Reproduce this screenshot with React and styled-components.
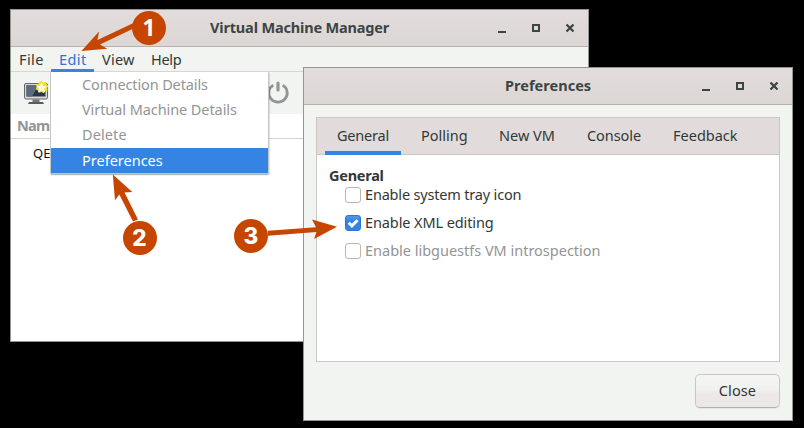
import React from "react";
import styled, { createGlobalStyle } from "styled-components";

const GlobalStyle = createGlobalStyle`
  * { box-sizing: border-box; }
  body { margin: 0; background: #000; overflow: hidden; }
`;

const Desktop = styled.div`
  position: relative;
  width: 804px;
  height: 428px;
  background: #000;
  overflow: hidden;
  font: 14.5px/20px "Noto Sans", sans-serif;
  color: #323837;
  white-space: nowrap;
`;

const Window = styled.section`
  position: absolute;
  left: ${(p) => p.$x}px;
  top: ${(p) => p.$y}px;
  width: ${(p) => p.$w}px;
  height: ${(p) => p.$h}px;
  display: flex;
  flex-direction: column;
  border: 1px solid #949694;
  background: #f1f4f1;
`;

const TitleBar = styled.header`
  flex: none;
  display: flex;
  align-items: center;
  height: 37px;
  padding: 0 11px 0 ${(p) => p.$pad}px;
  border-bottom: 1px solid #b8b2ad;
  background: linear-gradient(#e2dddc, #dcd6d5);
`;

const Title = styled.h1`
  flex: 1;
  margin: 0;
  padding-bottom: 2px;
  font: inherit;
  font-weight: 700;
  color: #3c4543;
  letter-spacing: ${(p) => p.$ls}px;
`;

const WindowButtons = styled.div`
  display: flex;
  gap: 20px;
`;

const Glyph = styled.svg`
  display: block;
  width: 14px;
  height: 14px;
`;

const MenuBar = styled.nav`
  flex: none;
  display: flex;
  height: 25px;
  border-bottom: 1px solid #d5d7d3;
`;

const MenuTitle = styled.div`
  width: ${(p) => p.$w}px;
  height: 25px;
  padding: 2px 0 0 8px;
  letter-spacing: ${(p) => p.$ls}px;
  color: ${(p) => (p.$open ? "#2f72d2" : "#323837")};
  box-shadow: ${(p) => (p.$open ? "inset 0 -3px #3584e4" : "none")};
`;

const ToolBar = styled.div`
  flex: none;
  display: flex;
  justify-content: space-between;
  width: 282px;
  height: 42px;
  padding: 7px 2px 0 12px;
`;

const ToolIcon = styled.svg`
  display: block;
  width: 28px;
  height: 28px;
`;

const MachineList = styled.div`
  flex: 1;
  background: #fff;
`;

const ColumnHeader = styled.div`
  height: 25px;
  padding: 1px 0 0 6px;
  border-bottom: 1px solid #d6d2cc;
  font-weight: 700;
  letter-spacing: -0.7px;
  color: #929595;
`;

const MachineRow = styled.div`
  padding: 5px 0 0 22px;
  font-size: 13px;
  line-height: 18px;
  color: #111;
`;

const Menu = styled.div`
  position: absolute;
  left: 50px;
  top: 72px;
  width: 219px;
  height: 102px;
  padding-top: 1px;
  border: 1px solid #c5c7c5;
  border-top: 0;
  background: #fff;
  box-shadow: 0 2px 1px -1px rgba(0, 0, 0, 0.22), 1px 1px 1px rgba(0, 0, 0, 0.1);
`;

const MenuItem = styled.div`
  height: 25px;
  padding: ${(p) => (p.$active ? 2 : 1)}px 0 0 31px;
  letter-spacing: ${(p) => p.$ls}px;
  color: ${(p) => (p.$active ? "#fff" : "#929595")};
  background: ${(p) => (p.$active ? "#3584e4" : "transparent")};
`;

const DialogBody = styled.div`
  flex: 1;
  display: flex;
  flex-direction: column;
  align-items: flex-end;
  gap: 12px;
  padding: 12px;
`;

const Notebook = styled.div`
  width: 464px;
  height: 245px;
  border: 1px solid #cdc7c2;
  background: #fff;
`;

const Tabs = styled.div`
  display: flex;
  gap: 2px;
  height: 37px;
  padding-left: 8px;
  border-bottom: 1px solid #cdc7c2;
  background: #e1dcdb;
`;

const Tab = styled.div`
  width: ${(p) => p.$w}px;
  height: 37px;
  padding: 7px 0 0 12px;
  margin-right: ${(p) => (p.$active ? 6 : 0)}px;
  letter-spacing: ${(p) => p.$ls}px;
  box-shadow: ${(p) => (p.$active ? "inset 0 -4px #3584e4" : "none")};
`;

const Page = styled.div`
  padding: 10px 0 0 12px;
`;

const Heading = styled.h2`
  margin: 0;
  font: inherit;
  font-weight: 700;
  letter-spacing: -0.25px;
`;

const Option = styled.label`
  display: flex;
  align-items: center;
  gap: 4px;
  height: 28px;
  padding-left: 16px;
  letter-spacing: ${(p) => p.$ls}px;
  color: ${(p) => (p.$disabled ? "#929595" : "#323837")};
`;

const OptionText = styled.span`
  padding-bottom: 2px;
`;

const Options = styled.div`
  margin-top: -4px;
`;

const Box = styled.span`
  display: block;
  width: 16px;
  height: 16px;
  border: 1px solid ${(p) => (p.$checked ? "#2a76d8" : "#bdb5b0")};
  border-radius: 3px;
  background: ${(p) => (p.$checked ? "linear-gradient(#5596e6, #3584e4 35%)" : "#fff")};
`;

const CheckMark = styled.svg`
  display: block;
  width: 14px;
  height: 14px;
`;

const CloseButton = styled.button`
  width: 85px;
  height: 34px;
  padding: 0 0 3px;
  border: 1px solid #cdc5c0;
  border-bottom-color: #b8aeaa;
  border-radius: 5px;
  background: linear-gradient(#f5f6f4, #f1f1ef 45%, #ebe8e7 60%);
  box-shadow: 0 1px 1px rgba(0, 0, 0, 0.06);
  font: inherit;
  color: inherit;
  letter-spacing: 0.09px;
`;

const Callouts = styled.svg`
  position: absolute;
  inset: 0;
  width: 804px;
  height: 428px;
  pointer-events: none;
`;

const Badge = styled.div`
  position: absolute;
  left: ${(p) => p.$x - 17}px;
  top: ${(p) => p.$y - 17}px;
  width: 34px;
  height: 34px;
  border-radius: 50%;
  background: #c64600;
  color: #fff;
  font-family: ${(p) => (p.$humanist ? '"Noto Sans"' : "Inter")}, sans-serif;
  font-size: 22.5px;
  font-weight: ${(p) => (p.$humanist ? 700 : 800)};
  line-height: 34px;
  text-align: center;
`;

function Controls() {
  return (
    <WindowButtons>
      <Glyph viewBox="0 0 14 14"><path d="M3 10h8v2H3z" fill="#3c4543" /></Glyph>
      <Glyph viewBox="0 0 14 14"><path d="M4 4h6v6H4z" fill="none" stroke="#3c4543" strokeWidth="2" /></Glyph>
      <Glyph viewBox="0 0 14 14"><path d="M3.5 3.5l7 7m0-7l-7 7" stroke="#3c4543" strokeWidth="2.3" /></Glyph>
    </WindowButtons>
  );
}

function MonitorIcon() {
  return (
    <ToolIcon viewBox="0 0 28 28">
      <rect x="1.5" y="4.5" width="23" height="15.5" rx="1.5" fill="#d9dad6" stroke="#63676b" />
      <rect x="3.5" y="6" width="19" height="11.5" fill="#263650" />
      <path d="M3.5 6h12L9 17.5H3.500z" fill="#5c6b80" />
      <path d="M9.5 20.500h7V23h-7z" fill="#72767a" />
      <path d="M6 23h14l1 2H5z" fill="#555b60" />
      <path d="M18.5 2l2 1.500 2.500-.5.500 2.500 2 1.500-1.300 2 .5 2.500-2.500.7-1.500 2-2.200-1.200-2.500.8-1-2.300-2.300-1.200 1-2.300-.8-2.500 2.500-.8L16.500 2.500z" fill="#f0e02c" />
      <path d="M18.5 3.5l1.6 3.4 3.7.4-2.7 2.5.8 3.7-3.4-1.9-3.3 1.9.7-3.7-2.7-2.5 3.7-.4z" fill="#fffde8" />
    </ToolIcon>
  );
}

function PowerIcon() {
  return (
    <ToolIcon viewBox="0 0 28 28">
      <path d="M10.3 6.1A9.2 9.2 0 1 0 19.7 6.1" fill="none" stroke="#929595" strokeWidth="2.8" />
      <path d="M15 4v7" stroke="#929595" strokeWidth="3.2" strokeLinecap="round" />
    </ToolIcon>
  );
}

export default function App() {
  return (
    <>
      <GlobalStyle />
      <Desktop>
        <Window $x={10} $y={9} $w={579} $h={333}>
          <TitleBar $pad={199}>
            <Title $ls={-0.17}>Virtual Machine Manager</Title>
            <Controls />
          </TitleBar>
          <MenuBar>
            <MenuTitle $w={40} $ls={0.4}>File</MenuTitle>
            <MenuTitle $w={43} $ls={0.4} $open>Edit</MenuTitle>
            <MenuTitle $w={49} $ls={0.22}>View</MenuTitle>
            <MenuTitle $w={45} $ls={-0.3}>Help</MenuTitle>
          </MenuBar>
          <ToolBar>
            <MonitorIcon />
            <PowerIcon />
          </ToolBar>
          <MachineList>
            <ColumnHeader>Name</ColumnHeader>
            <MachineRow>QEMU</MachineRow>
          </MachineList>
        </Window>

        <Menu>
          <MenuItem $ls={-0.12}>Connection Details</MenuItem>
          <MenuItem $ls={-0.08}>Virtual Machine Details</MenuItem>
          <MenuItem $ls={0.1}>Delete</MenuItem>
          <MenuItem $ls={0} $active>Preferences</MenuItem>
        </Menu>

        <Window $x={303} $y={67} $w={490} $h={354}>
          <TitleBar $pad={201}>
            <Title $ls={0.03}>Preferences</Title>
            <Controls />
          </TitleBar>
          <DialogBody>
            <Notebook>
              <Tabs>
                <Tab $w={76} $ls={-0.2} $active>General</Tab>
                <Tab $w={76} $ls={0}>Polling</Tab>
                <Tab $w={86} $ls={0}>New VM</Tab>
                <Tab $w={84} $ls={-0.06}>Console</Tab>
                <Tab $w={90} $ls={0}>Feedback</Tab>
              </Tabs>
              <Page>
                <Heading>General</Heading>
                <Options>
                  <Option $ls={-0.18}><Box /><OptionText>Enable system tray icon</OptionText></Option>
                  <Option $ls={-0.1}>
                    <Box $checked>
                      <CheckMark viewBox="0 0 14 14">
                        <path d="M2.8 6.8l3.1 3.1 5.6-5.6" fill="none" stroke="#fff" strokeWidth="3" />
                      </CheckMark>
                    </Box>
                    <OptionText>Enable XML editing</OptionText>
                  </Option>
                  <Option $ls={-0.01} $disabled><Box /><OptionText>Enable libguestfs VM introspection</OptionText></Option>
                </Options>
              </Page>
            </Notebook>
            <CloseButton>Close</CloseButton>
          </DialogBody>
        </Window>

        <Callouts viewBox="0 0 804 428">
          <g fill="#c64600">
            <path d="M81.5 51L99 31.5L97.5 40L133 23.3V28.7L100 44.5L107.300 48.7Z" />
            <path d="M112.8 174.5L132.3 192L124.5 192.500L138 219.500L133 221.500L119.3 194.500L115 200.3Z" />
            <path d="M337 226.8L312 219.6L316 227.2L268 230.800V235.700L316.500 232L314 239Z" />
          </g>
        </Callouts>
        <Badge $x={149} $y={27.5} $humanist>1</Badge>
        <Badge $x={139.5} $y={238}>2</Badge>
        <Badge $x={251} $y={236}>3</Badge>
      </Desktop>
    </>
  );
}
